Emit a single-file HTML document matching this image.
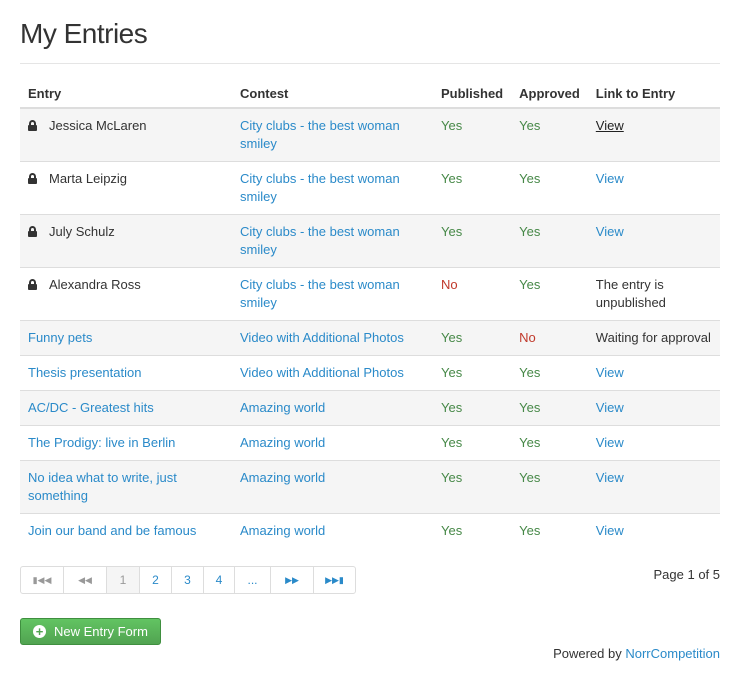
<!DOCTYPE html>
<html><head><style>
*{box-sizing:border-box;margin:0;padding:0}
body{width:740px;height:683px;background:#fff;font-family:"Liberation Sans",sans-serif;font-size:13px;color:#333;position:relative;overflow:hidden}
h1{position:absolute;left:20px;top:18px;font-size:28px;font-weight:normal;letter-spacing:-0.5px;color:#333}
.hr{position:absolute;left:20px;width:700px;top:63px;border-top:1px solid #e5e5e5}
table{position:absolute;left:20px;top:80px;width:700px;border-collapse:collapse}
th{text-align:left;font-weight:bold;height:28px;padding:0 8px;border-bottom:2px solid #ddd;vertical-align:middle}
td{padding:8px 8px 8px 8px;line-height:18px;vertical-align:top;border-top:1px solid #ddd}
tr.s td{background:#f5f5f5}
a{color:#2a8ac9;text-decoration:none}
.g{color:#468847}.r{color:#c0392b}
.lock{display:inline-block;width:9px;height:11px;position:relative;margin-right:12px;vertical-align:-1px}
.lock:before{content:"";position:absolute;left:1px;top:0;width:7px;height:6px;border:2px solid #333;border-bottom:none;border-radius:4px 4px 0 0;box-sizing:border-box}
.lock:after{content:"";position:absolute;left:0;top:5px;width:9px;height:6px;background:#333;border-radius:1px}
.pg{position:absolute;left:20px;top:566px;height:28px;display:flex;border:1px solid #ddd;border-radius:3px}
.pg div{height:26px;border-left:1px solid #ddd;display:flex;align-items:center;justify-content:center;color:#2a8ac9;font-size:12px}
.pg div:first-child{border-left:none}
.btn{position:absolute;left:20px;top:618px;width:141px;height:27px;background:linear-gradient(#62c462,#51a351);border:1px solid #3f8f3f;border-radius:3px;color:#fff;font-size:13px;display:flex;align-items:center;padding-left:12px}
.btn .c{width:13px;height:13px;border-radius:50%;background:#fff;color:#51a351;font-weight:bold;font-size:13px;line-height:13px;text-align:center;margin-right:8px}
</style></head><body>
<h1>My Entries</h1>
<div class="hr"></div>
<table>
<colgroup><col style="width:212px"><col style="width:201px"><col style="width:78px"><col style="width:76px"><col></colgroup>
<tr><th>Entry</th><th>Contest</th><th>Published</th><th>Approved</th><th>Link to Entry</th></tr>
<tr class="s"><td><span class="lock"></span>Jessica McLaren</td><td><a>City clubs - the best woman smiley</a></td><td class="g">Yes</td><td class="g">Yes</td><td><a style="color:#222;text-decoration:underline">View</a></td></tr>
<tr><td><span class="lock"></span>Marta Leipzig</td><td><a>City clubs - the best woman smiley</a></td><td class="g">Yes</td><td class="g">Yes</td><td><a>View</a></td></tr>
<tr class="s"><td><span class="lock"></span>July Schulz</td><td><a>City clubs - the best woman smiley</a></td><td class="g">Yes</td><td class="g">Yes</td><td><a>View</a></td></tr>
<tr><td><span class="lock"></span>Alexandra Ross</td><td><a>City clubs - the best woman smiley</a></td><td class="r">No</td><td class="g">Yes</td><td>The entry is unpublished</td></tr>
<tr class="s"><td><a>Funny pets</a></td><td><a>Video with Additional Photos</a></td><td class="g">Yes</td><td class="r">No</td><td>Waiting for approval</td></tr>
<tr><td><a>Thesis presentation</a></td><td><a>Video with Additional Photos</a></td><td class="g">Yes</td><td class="g">Yes</td><td><a>View</a></td></tr>
<tr class="s"><td><a>AC/DC - Greatest hits</a></td><td><a>Amazing world</a></td><td class="g">Yes</td><td class="g">Yes</td><td><a>View</a></td></tr>
<tr><td><a>The Prodigy: live in Berlin</a></td><td><a>Amazing world</a></td><td class="g">Yes</td><td class="g">Yes</td><td><a>View</a></td></tr>
<tr class="s"><td><a>No idea what to write, just something</a></td><td><a>Amazing world</a></td><td class="g">Yes</td><td class="g">Yes</td><td><a>View</a></td></tr>
<tr><td><a>Join our band and be famous</a></td><td><a>Amazing world</a></td><td class="g">Yes</td><td class="g">Yes</td><td><a>View</a></td></tr>
</table>
<div class="pg">
<div style="width:42px;color:#999;font-size:9px">&#9646;&#9664;&#9664;</div>
<div style="width:43px;color:#999;font-size:9px">&#9664;&#9664;</div>
<div style="width:33px;background:#f5f5f5;color:#999">1</div>
<div style="width:32px">2</div>
<div style="width:32px">3</div>
<div style="width:31px">4</div>
<div style="width:36px">...</div>
<div style="width:43px;font-size:9px">&#9654;&#9654;</div>
<div style="width:42px;font-size:9px">&#9654;&#9654;&#9646;</div>
</div>
<div style="position:absolute;right:20px;top:567px">Page 1 of 5</div>
<div class="btn"><span class="c">+</span>New Entry Form</div>
<div style="position:absolute;right:20px;top:646px">Powered by <a>NorrCompetition</a></div>
</body></html>
